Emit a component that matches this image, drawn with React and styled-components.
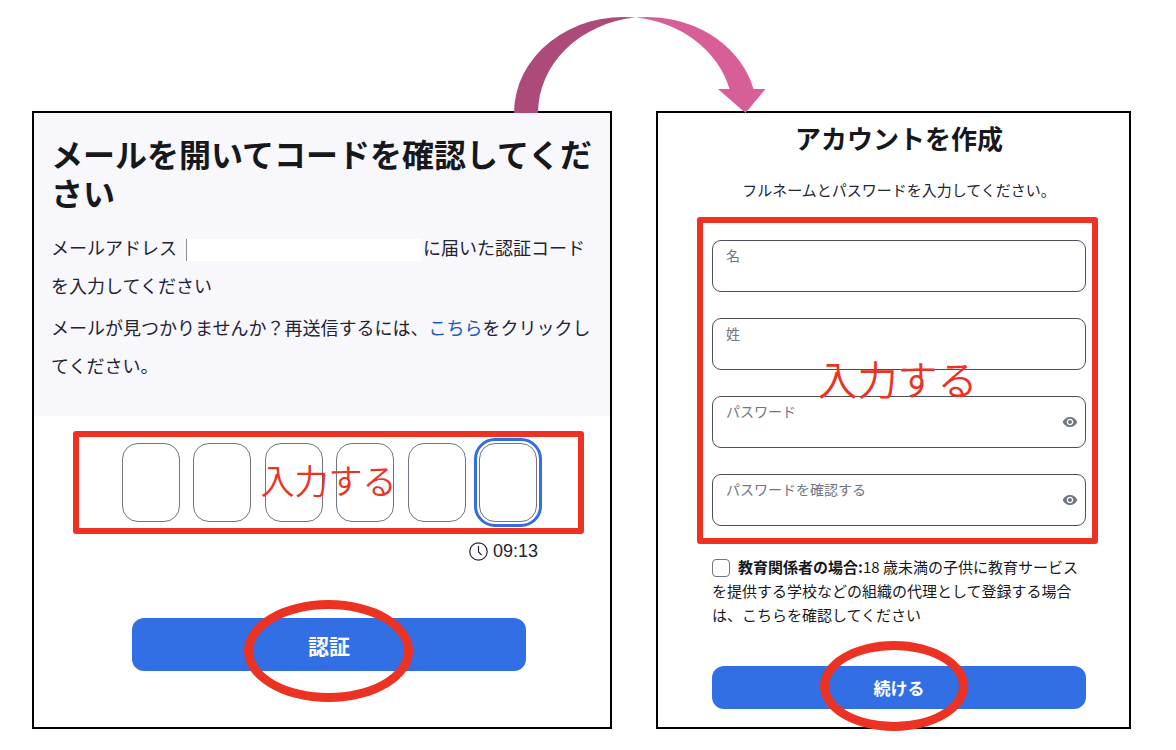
import React from "react";
import styled, { createGlobalStyle, css } from "styled-components";
import { MdVisibility } from "react-icons/md";

const GlobalStyle = createGlobalStyle`
  *, *::before, *::after { box-sizing: border-box; }
  body {
    margin: 0;
    background: #ffffff;
    color: #232333;
    font-family: "Noto Sans CJK JP", sans-serif;
  }
  h1, h2, p { margin: 0; }
`;

const RED = "#ec3323";
const BLUE = "#326fe5";

const Page = styled.main`
  display: grid;
  grid-template-columns: 580fr 475fr;
  gap: 44px;
  padding: 111px 45px 21px 32px;
`;

const Panel = styled.section`
  position: relative;
  min-width: 0;
  border: 2px solid #000000;
`;

const FlowArrow = styled.svg`
  position: absolute;
  z-index: 1;
  top: -97px;
  right: -157px;
  width: 254px;
  height: 98px;
`;

const Intro = styled.header`
  padding: 21px 3px 32px 17px;
  background: #f7f7fc;
`;

const CodeTitle = styled.h1`
  color: #17181c;
  font-size: 32px;
  font-weight: 700;
  line-height: 39px;
`;

const IntroText = styled.p`
  margin-top: ${(p) => (p.$first ? 16 : 4)}px;
  padding-right: ${(p) => (p.$first ? 10 : 0)}px;
  font-size: 18px;
  line-height: 38px;
`;

const HiddenAddress = styled.span`
  display: inline-block;
  width: 235px;
  height: 22px;
  margin: 0 2px 0 9px;
  border-left: 1px solid #8d8d96;
  background: #ffffff;
  vertical-align: middle;
`;

const Link = styled.a`
  color: #1d5bc4;
  text-decoration: none;
`;

const Frame = styled.div`
  position: relative;
  border: 6px solid ${RED};
  border-radius: 3px;
`;

const CodeFrame = styled(Frame)`
  display: flex;
  justify-content: space-between;
  margin: 15px 26px 0 39px;
  padding: 6px 41px 6px 43px;
`;

const FormFrame = styled(Frame)`
  display: flex;
  flex-direction: column;
  gap: 26px;
  margin: 15px 31px 0 39px;
  padding: 17px 6px 12px 9px;
`;

const Note = styled.span`
  position: absolute;
  inset: 0;
  display: grid;
  place-items: center;
  padding-bottom: 6px;
  color: ${RED};
  font-size: ${(p) => p.$size}px;
  font-weight: 350;
  line-height: 1;
  pointer-events: none;
`;

const Digit = styled.input`
  width: 58px;
  height: 79px;
  padding: 0;
  border: 1px solid #6e7680;
  border-radius: 16px;
  background: #ffffff;
  font-size: 32px;
  text-align: center;
  ${(p) =>
    p.$active &&
    css`
      outline: 3px solid ${BLUE};
      outline-offset: 2px;
    `}
`;

const Timer = styled.div`
  display: flex;
  align-items: center;
  justify-content: flex-end;
  gap: 5px;
  height: 24px;
  margin: 5px 72px 0 0;
  font-family: "Liberation Sans", Arial, sans-serif;
  font-size: 18px;
`;

const ActionRow = styled.div`
  position: relative;
  margin: ${(p) => (p.$wide ? "39px 43px 18px 54px" : "55px 84px 56px 98px")};
`;

const Action = styled.button`
  display: block;
  width: 100%;
  height: ${(p) => (p.$wide ? 43 : 53)}px;
  padding: 0;
  border: 0;
  border-radius: 12px;
  background: ${BLUE};
  color: #ffffff;
  font-family: inherit;
  font-size: ${(p) => (p.$wide ? 17 : 21)}px;
  font-weight: 700;
`;

const Ring = styled.span`
  position: absolute;
  top: ${(p) => p.$top}px;
  left: calc(50% - ${(p) => p.$reach}px);
  width: ${(p) => p.$width}px;
  height: ${(p) => p.$height}px;
  border: 9px solid ${RED};
  border-radius: 50%;
  pointer-events: none;
`;

const FormHeader = styled.header`
  padding: 6px 43px 0 54px;
  text-align: center;
`;

const FormTitle = styled.h2`
  color: #17181c;
  font-size: 26px;
  font-weight: 700;
  line-height: 38px;
`;

const FormText = styled.p`
  margin-top: 21px;
  font-size: 15px;
  line-height: 24px;
`;

const Field = styled.div`
  display: flex;
  align-items: center;
  height: 52px;
  padding: 0 7px 0 13px;
  border: 1px solid #4a4f5a;
  border-radius: 9px;
`;

const FieldBody = styled.div`
  display: flex;
  flex: 1;
  flex-direction: column;
  min-width: 0;
`;

const FieldLabel = styled.label`
  color: #6e7680;
  font-size: 14px;
  line-height: 20px;
`;

const FieldInput = styled.input`
  height: 22px;
  padding: 0;
  border: 0;
  outline: 0;
  background: transparent;
  font: inherit;
  font-size: 14px;
`;

const EyeButton = styled.button`
  display: flex;
  padding: 0;
  border: 0;
  background: none;
  color: #6e7680;
`;

const Consent = styled.label`
  display: block;
  margin: 11px 43px 0 54px;
  color: #17181c;
  font-size: 15px;
  line-height: 24px;
`;

const Checkbox = styled.input`
  appearance: none;
  width: 18px;
  height: 18px;
  margin: 0 8px 2px 0;
  border: 1px solid #6e7680;
  border-radius: 4px;
  background: #ffffff;
  vertical-align: middle;
`;

const fields = [
  { id: "first", label: "名", type: "text" },
  { id: "last", label: "姓", type: "text" },
  { id: "password", label: "パスワード", type: "password" },
  { id: "confirm", label: "パスワードを確認する", type: "password" },
];

function ClockIcon() {
  return (
    <svg width="19" height="19" viewBox="0 0 19 19" fill="none" stroke="#232333" strokeWidth="1.2" aria-hidden="true">
      <circle cx="9.5" cy="9.5" r="8.7" />
      <path d="M9.5 4v6l3 3" />
    </svg>
  );
}

function TextField({ id, label, type }) {
  return (
    <Field>
      <FieldBody>
        <FieldLabel htmlFor={id}>{label}</FieldLabel>
        <FieldInput id={id} type={type} />
      </FieldBody>
      {type === "password" && (
        <EyeButton type="button" aria-label="表示">
          <MdVisibility size={16} />
        </EyeButton>
      )}
    </Field>
  );
}

export default function App() {
  return (
    <>
      <GlobalStyle />
      <Page lang="ja">
        <Panel>
          <FlowArrow viewBox="0 0 254 98" aria-hidden="true">
            <path fill="#ac4a79" d="M1 97A109.5 96 0 0 1 122.5 1.6A109.5 96 0 0 0 25 97Z" />
            <path fill="#d85e97" d="M122.5 1.6A109.5 96 0 0 1 240.5 73H252.5L232.5 97L205 73H216.5A109.5 96 0 0 0 122.5 1.6Z" />
          </FlowArrow>
          <Intro>
            <CodeTitle>メールを開いてコードを確認してください</CodeTitle>
            <IntroText $first>
              メールアドレス
              <HiddenAddress />
              に届いた認証コードを入力してください
            </IntroText>
            <IntroText>
              メールが見つかりませんか？再送信するには、<Link href="#resend">こちら</Link>をクリックしてください。
            </IntroText>
          </Intro>
          <CodeFrame>
            {[1, 2, 3, 4, 5, 6].map((n) => (
              <Digit key={n} $active={n === 6} maxLength={1} inputMode="numeric" aria-label={`認証コード ${n}`} />
            ))}
            <Note $size={34}>入力する</Note>
          </CodeFrame>
          <Timer>
            <ClockIcon />
            09:13
          </Timer>
          <ActionRow>
            <Action type="button">認証</Action>
            <Ring $top={-18} $reach={85} $width={169} $height={102} />
          </ActionRow>
        </Panel>

        <Panel>
          <FormHeader>
            <FormTitle>アカウントを作成</FormTitle>
            <FormText>フルネームとパスワードを入力してください。</FormText>
          </FormHeader>
          <FormFrame>
            {fields.map((f) => (
              <TextField key={f.id} {...f} />
            ))}
            <Note $size={40}>入力する</Note>
          </FormFrame>
          <Consent>
            <Checkbox type="checkbox" />
            <strong>教育関係者の場合:</strong>18 歳未満の子供に教育サービスを提供する学校などの組織の代理として登録する場合は、こちらを確認してください
          </Consent>
          <ActionRow $wide>
            <Action type="button" $wide>続ける</Action>
            <Ring $top={-25} $reach={79} $width={148} $height={90} />
          </ActionRow>
        </Panel>
      </Page>
    </>
  );
}
